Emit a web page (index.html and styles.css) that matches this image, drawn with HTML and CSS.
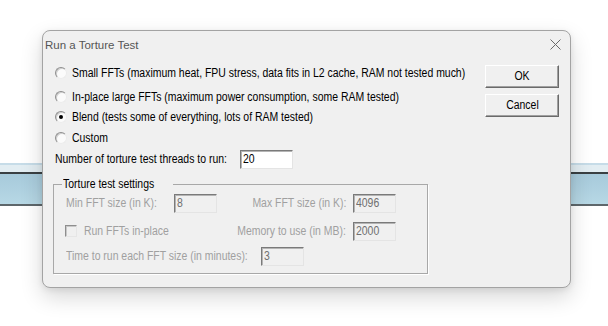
FILE: index.html
```html
<!DOCTYPE html>
<html>
<head>
<meta charset="utf-8">
<title>Run a Torture Test</title>
<link rel="stylesheet" href="styles.css">
</head>
<body>
<div class="desktop">
  <div class="band"></div>
  <div class="dialog">
    <div class="titlebar">
      <span class="title">Run a Torture Test</span>
      <svg class="close" width="11" height="11" viewBox="0 0 11 11"><path d="M0.5 0.5L10.5 10.5M10.5 0.5L0.5 10.5" stroke="#6a6a6a" stroke-width="1" fill="none"/></svg>
    </div>
    <div class="body">
      <div class="options">
        <label class="opt r1"><span class="radio"></span><span class="t">Small FFTs (maximum heat, FPU stress, data fits in L2 cache, RAM not tested much)</span></label>
        <label class="opt r2"><span class="radio"></span><span class="t">In-place large FFTs (maximum power consumption, some RAM tested)</span></label>
        <label class="opt r3"><span class="radio checked"></span><span class="t">Blend (tests some of everything, lots of RAM tested)</span></label>
        <label class="opt r4"><span class="radio"></span><span class="t">Custom</span></label>
        <div class="threads"><span class="threads-label"><span class="t">Number of torture test threads to run:</span></span><span class="field wide"><span class="t">20</span></span></div>
        <fieldset class="group">
          <legend><span class="t">Torture test settings</span></legend>
          <div class="grid">
            <span class="dis"><span class="t">Min FFT size (in K):</span></span>
            <span class="field off"><span class="t">8</span></span>
            <span class="dis right"><span class="t">Max FFT size (in K):</span></span>
            <span class="field off"><span class="t">4096</span></span>
            <span class="check-cell"><span class="checkbox"></span><span class="dis"><span class="t">Run FFTs in-place</span></span></span>
            <span class="dis right"><span class="t">Memory to use (in MB):</span></span>
            <span class="field off"><span class="t">2000</span></span>
          </div>
          <div class="time"><span class="dis time-label"><span class="t">Time to run each FFT size (in minutes):</span></span><span class="field off"><span class="t">3</span></span></div>
        </fieldset>
      </div>
      <div class="buttons">
        <div class="btn"><span class="t">OK</span></div>
        <div class="btn"><span class="t">Cancel</span></div>
      </div>
    </div>
  </div>
</div>
</body>
</html>
```
FILE: styles.css
```css
html, body {
  margin: 0;
  padding: 0;
  background: #ffffff;
}
.desktop {
  position: relative;
  width: 608px;
  height: 326px;
  overflow: hidden;
  background: #ffffff;
  font-family: "Liberation Sans", Arial, sans-serif;
  font-size: 12.5px;
  color: #000;
}
.t {
  display: inline-block;
  white-space: nowrap;
  transform: scaleX(0.836);
  transform-origin: left center;
}
.band {
  position: absolute;
  left: 0;
  right: 0;
  top: 163px;
  height: 43px;
  background: linear-gradient(to bottom,
    #c6dce8 0, #c6dce8 2px,
    #e2edf2 2px, #e2edf2 9px,
    #3a4043 9px, #3a4043 11px,
    #a7cadb 11px, #b7d8e5 41px,
    #5e676b 41px, #5e676b 43px);
}
.dialog {
  position: absolute;
  left: 42px;
  top: 30px;
  width: 527px;
  height: 256px;
  border: 1px solid #a3a3a3;
  border-radius: 8px;
  background: #f0f0f0;
  box-shadow: 0 9px 22px rgba(0, 0, 0, 0.16), 0 2px 6px rgba(0, 0, 0, 0.08);
  overflow: hidden;
}
.titlebar {
  height: 27px;
  display: flex;
  align-items: center;
  justify-content: space-between;
  padding: 0 9px 0 2px;
}
.title {
  font-family: "Liberation Sans", Arial, sans-serif;
  font-size: 11.5px;
  color: #555;
}
.close {
  display: block;
}
.body {
  display: flex;
  padding: 5px 11px 0 12px;
}
.options {
  flex: 1;
  min-width: 0;
}
.opt {
  display: flex;
  align-items: center;
  height: 20px;
  gap: 5px;
  white-space: nowrap;
}
.r1 { margin-bottom: 4px; }
.r3 { margin-bottom: 1px; }
.r4 { margin-bottom: 1px; }
.radio {
  position: relative;
  flex: none;
  width: 12px;
  height: 12px;
  box-sizing: border-box;
  border-radius: 50%;
  border: 1px solid;
  border-color: #8e8e8e #ececec #ececec #8e8e8e;
  background: #fbfbfb;
  box-shadow: inset 1px 1px 0 #cfcfcf;
}
.radio.checked::after {
  content: "";
  position: absolute;
  left: 3px;
  top: 3px;
  width: 4px;
  height: 4px;
  border-radius: 50%;
  background: #000;
}
.threads {
  display: flex;
  align-items: center;
  height: 20px;
}
.threads-label {
  flex: none;
  width: 185px;
  white-space: nowrap;
  overflow: visible;
}
.field {
  flex: none;
  box-sizing: border-box;
  width: 43px;
  height: 19px;
  line-height: 17px;
  padding-left: 2px;
  border: 1px solid;
  border-color: #7a7a7a #e4e4e4 #e4e4e4 #7a7a7a;
  box-shadow: inset 1px 1px 0 #b4b4b4;
  background: #fff;
  white-space: nowrap;
}
.field.wide {
  width: 53px;
}
.field.off {
  background: #f0f0f0;
  color: #6f6f6f;
}
.group {
  margin: 8px 0 0 -2px;
  padding: 0 0 7px 0;
  width: 375px;
  box-sizing: border-box;
  border: 1px solid #a8a8a8;
  box-shadow: 1px 1px 0 #ffffff;
}
.group legend {
  margin-left: 8px;
  padding: 0 1px;
  line-height: 14px;
}
.grid {
  display: grid;
  grid-template-columns: 108px 43px 136px 43px;
  grid-auto-rows: 20px;
  row-gap: 8px;
  align-items: center;
  margin: 2px 0 0 12px;
}
.dis {
  color: #a0a0a0;
  white-space: nowrap;
}
.right {
  display: flex;
  justify-content: flex-end;
  padding-right: 7px;
}
.right .t {
  transform-origin: right center;
}
.check-cell {
  grid-column: 1 / span 2;
  display: flex;
  align-items: center;
  gap: 7px;
  margin-left: -1px;
}
.checkbox {
  flex: none;
  width: 12px;
  height: 12px;
  box-sizing: border-box;
  border: 1px solid;
  border-color: #8e8e8e #e6e6e6 #e6e6e6 #8e8e8e;
  box-shadow: inset 1px 1px 0 #c8c8c8;
  background: #f0f0f0;
}
.time {
  display: flex;
  align-items: center;
  height: 20px;
  margin: 5px 0 0 12px;
}
.time-label {
  flex: none;
  width: 195px;
}
.buttons {
  flex: none;
  width: 74px;
  display: flex;
  flex-direction: column;
  gap: 6px;
  margin-top: 2px;
}
.btn {
  box-sizing: border-box;
  height: 23px;
  line-height: 21px;
  text-align: center;
  border: 1px solid;
  border-color: #ffffff #6a6a6a #6a6a6a #ffffff;
  box-shadow: inset -1px -1px 0 #a0a0a0;
  background: #f0f0f0;
}
.btn .t {
  transform-origin: center center;
}
```
